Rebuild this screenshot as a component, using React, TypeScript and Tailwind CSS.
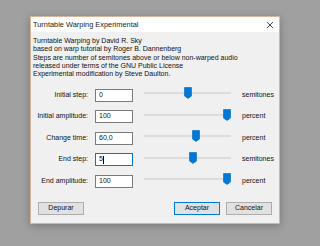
import React from "react";

const rows = [
  { label: "Initial step:", value: "0", unit: "semitones", thumb: 40 },
  { label: "Initial amplitude:", value: "100", unit: "percent", thumb: 79 },
  { label: "Change time:", value: "60,0", unit: "percent", thumb: 48 },
  { label: "End step:", value: "5", unit: "semitones", thumb: 45, focused: true },
  { label: "End amplitude:", value: "100", unit: "percent", thumb: 79 },
];

function Thumb({ left }: { left: number }) {
  return (
    <svg
      width="8"
      height="12"
      viewBox="0 0 8 12"
      className="absolute top-[-1px]"
      style={{ left }}
    >
      <path d="M0.5 0.5 H7.5 V9 L4 11.5 L0.5 9 Z" fill="#0078d7" stroke="#0066bb" strokeWidth="0.6" />
    </svg>
  );
}

export default function App() {
  return (
    <div
      className="w-[320px] h-[246px] bg-[#a0a0a0] pt-[16px] pl-[30px] overflow-hidden"
      style={{ fontFamily: '"Liberation Sans", Arial, sans-serif' }}
    >
      <div className="w-[250px] h-[208px] border border-[#d6b59e] bg-[#f0f0f0] flex flex-col shadow-[0_2px_8px_rgba(0,0,0,0.25)]">
        {/* Title bar */}
        <div className="h-[15px] bg-white flex items-center justify-between pl-[2px] pr-[5px]">
          <span className="text-[7.4px] text-[#222]">Turntable Warping Experimental</span>
          <svg width="8" height="8" viewBox="0 0 8 8">
            <path d="M1 1 L7 7 M7 1 L1 7" stroke="#333" strokeWidth="0.9" />
          </svg>
        </div>

        {/* Description */}
        <div className="pl-[2px] pt-[5px] text-[7px] leading-[8.3px] text-[#111]">
          <div>Turntable Warping by David R. Sky</div>
          <div>based on warp tutorial by Roger B. Dannenberg</div>
          <div>Steps are number of semitones above or below non-warped audio</div>
          <div>released under terms of the GNU Public License</div>
          <div>Experimental modification by Steve Daulton.</div>
        </div>

        {/* Controls */}
        <div className="mt-[6px] flex flex-col">
          {rows.map((r) => (
            <div key={r.label} className="h-[21.5px] flex items-center text-[7px] text-[#111]">
              <div className="w-[57px] text-right">{r.label}</div>
              <div
                className={`ml-[7px] w-[38px] h-[13px] bg-white border flex items-center pl-[3px] ${
                  r.focused ? "border-[#0078d7]" : "border-[#7a7a7a]"
                }`}
              >
                {r.value}
                {r.focused && <span className="w-px h-[8px] bg-black" />}
              </div>
              <div className="relative ml-[11px] w-[87px] h-[12px] mb-[2px]">
                <div className="absolute left-0 right-0 top-[4px] h-[2px] bg-[#dcdcdc]" />
                <Thumb left={r.thumb} />
              </div>
              <div className="ml-[11px]">{r.unit}</div>
            </div>
          ))}
        </div>

        {/* Buttons */}
        <div className="mt-auto mb-[8px] flex items-center px-[7px] text-[7px] text-[#111]">
          <button className="w-[46px] h-[13px] bg-[#e1e1e1] border border-[#adadad] flex items-center justify-center">
            Depurar
          </button>
          <button className="ml-auto w-[46px] h-[13px] bg-[#e1e1e1] border border-[#0078d7] flex items-center justify-center">
            Aceptar
          </button>
          <button className="ml-[6px] w-[46px] h-[13px] bg-[#e1e1e1] border border-[#adadad] flex items-center justify-center">
            Cancelar
          </button>
        </div>
      </div>
    </div>
  );
}
